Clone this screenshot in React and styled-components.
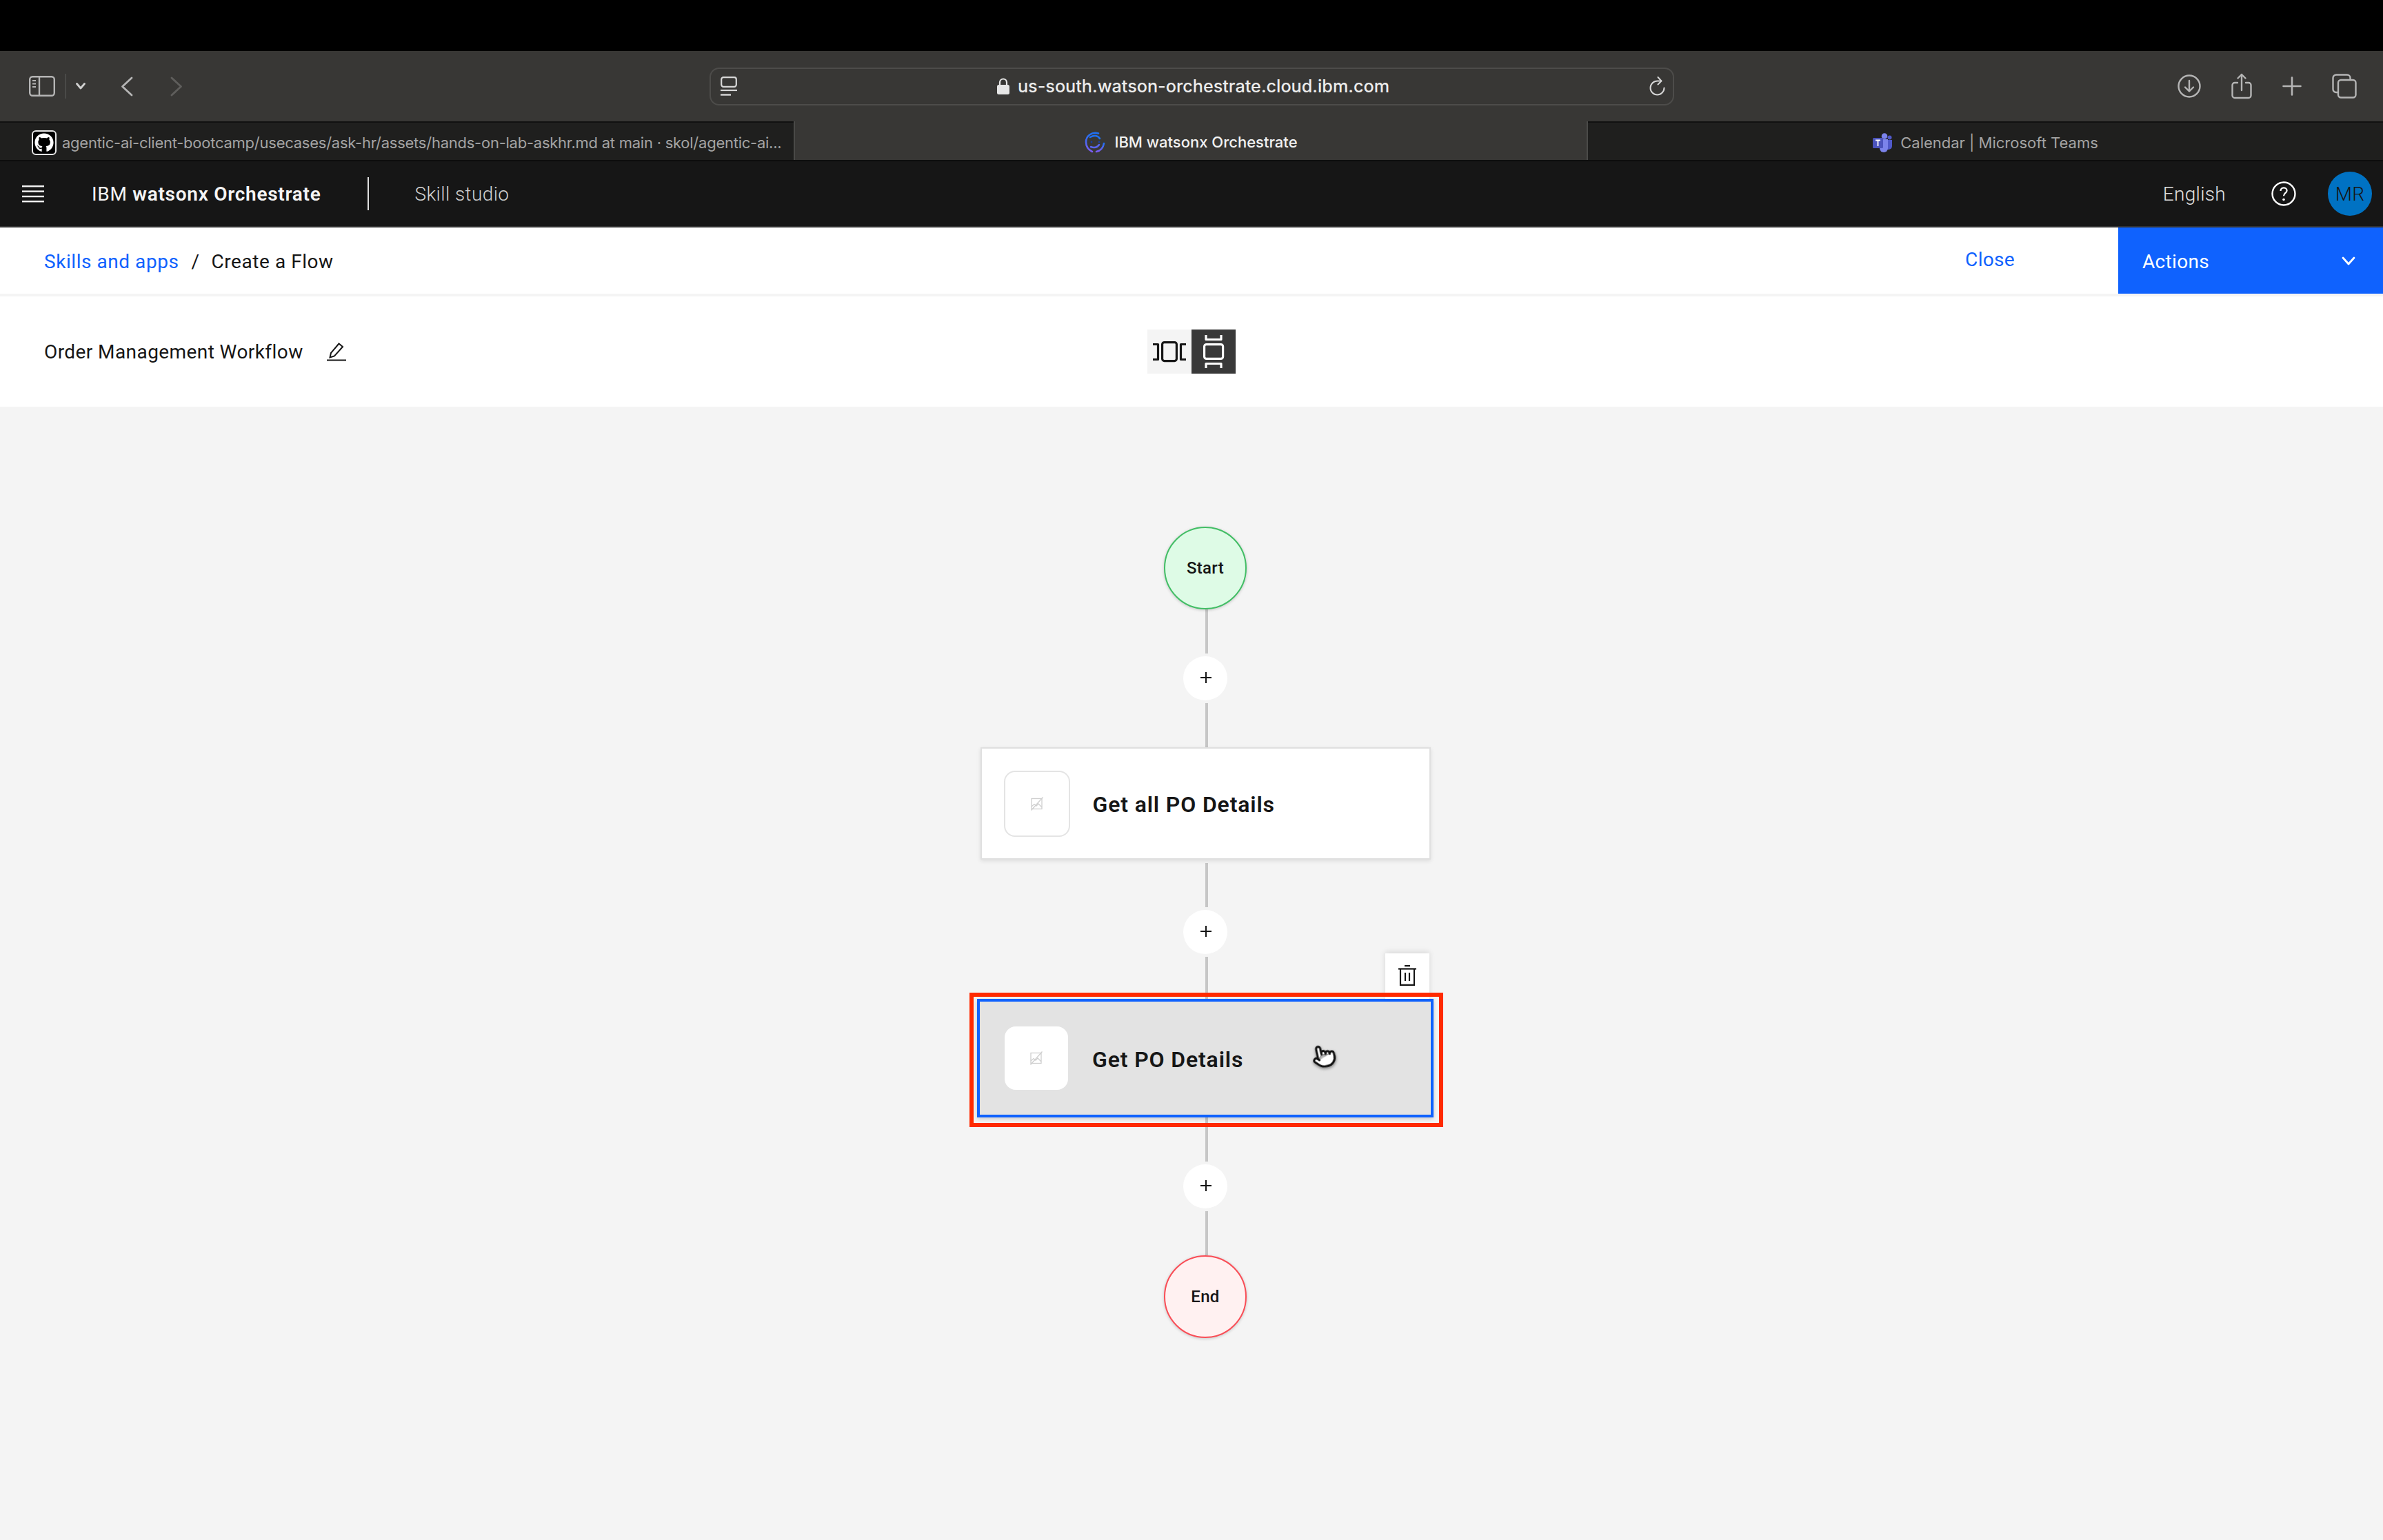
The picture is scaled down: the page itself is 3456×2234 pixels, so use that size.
import React from 'react';
import styled, { createGlobalStyle } from 'styled-components';
import { FaGithub } from 'react-icons/fa';
import { Pointer } from 'lucide-react';

const GlobalStyle = createGlobalStyle`
  html, body { margin: 0; padding: 0; background: #f4f4f4; overflow: hidden; }
  * { box-sizing: border-box; }
  #root { font-family: Roboto, "Liberation Sans", sans-serif; }
`;

const Page = styled.div`
  width: 3456px;
  height: 2234px;
  display: flex;
  flex-direction: column;
`;

const BlackStrip = styled.div`
  height: 74px;
  background: #000;
`;

/* browser toolbar */
const BrowserBar = styled.div`
  height: 104px;
  background: #383735;
  display: grid;
  grid-template-columns: 1029px 1399px 1fr;
  align-items: center;
  border-bottom: 2px solid #111;
`;

const NavCluster = styled.div`
  display: flex;
  align-items: center;
  padding-left: 42px;
  svg { display: block; }
`;

const ClusterRule = styled.div`
  width: 2px;
  height: 36px;
  background: #4a4a48;
  margin: 0 14px 0 14px;
`;

const NavGap = styled.div`
  width: ${(props) => props.$w}px;
`;

const AddressBar = styled.div`
  height: 55px;
  border: 2px solid #4d4c4a;
  border-radius: 14px;
  display: grid;
  grid-template-columns: 60px 1fr 60px;
  align-items: center;
  padding: 0 10px 0 14px;
`;

const UrlText = styled.div`
  display: flex;
  align-items: center;
  justify-content: center;
  gap: 12px;
  font-family: Inter, sans-serif;
  font-size: 25.2px;
  font-weight: 500;
  color: #ececec;
`;

const ReloadSlot = styled.div`
  display: flex;
  justify-content: flex-end;
`;

const RightIcons = styled.div`
  display: flex;
  align-items: center;
  justify-content: flex-end;
  gap: 44px;
  padding-right: 38px;
  svg { display: block; }
`;

/* browser tabs */
const TabStrip = styled.div`
  height: 56px;
  display: grid;
  grid-template-columns: 1151px 1152px 1fr;
  background: #1f1f1e;
  border-bottom: 2px solid #0d0d0d;
`;

const Tab = styled.div`
  display: flex;
  align-items: center;
  justify-content: ${(props) => (props.$left ? 'flex-start' : 'center')};
  gap: ${(props) => (props.$left ? 8 : 12)}px;
  padding-left: ${(props) => (props.$left ? '46px' : '0')};
  padding-top: 4px;
  font-family: Inter, sans-serif;
  font-size: 22px;
  letter-spacing: ${(props) => (props.$left ? '-0.25px' : '0')};
  font-weight: ${(props) => (props.$active ? 500 : 400)};
  color: ${(props) => (props.$active ? '#f2f2f2' : '#a3a3a3')};
  background: ${(props) => (props.$active ? '#383735' : 'transparent')};
  white-space: nowrap;
  ${(props) => props.$active && `
    margin-top: -2px;
    border-left: 2px solid #4a4a48;
    border-right: 2px solid #4a4a48;
  `}
`;

const GithubBox = styled.div`
  width: 36px;
  height: 36px;
  flex: none;
  background: #000;
  border: 2px solid #e6e6e6;
  border-radius: 6px;
  color: #fff;
  display: flex;
  align-items: center;
  justify-content: center;
`;

/* app header */
const AppHeader = styled.header`
  height: 96px;
  background: #161616;
  border-bottom: 2px solid #333;
  display: flex;
  align-items: center;
  padding: 0 16px 0 32px;
  color: #f4f4f4;
  letter-spacing: 0.32px;
`;

const Brand = styled.div`
  margin-left: 69px;
  font-size: 28px;
  letter-spacing: 0.72px;
  color: #f4f4f4;
  b { font-weight: 600; }
`;

const HeaderRule = styled.div`
  width: 2px;
  height: 48px;
  background: #e0e0e0;
  margin: 0 66px 0 68px;
`;

const SkillLabel = styled.div`
  font-size: 28px;
  font-weight: 300;
  letter-spacing: 0.4px;
  color: #d0d0d0;
`;

const Language = styled.div`
  margin-left: auto;
  font-size: 28px;
  font-weight: 300;
  color: #e0e0e0;
`;

const HelpIcon = styled.div`
  margin: 0 46px 0 66px;
  display: flex;
`;

const Avatar = styled.div`
  width: 64px;
  height: 64px;
  border-radius: 50%;
  background: #0072c3;
  color: #161616;
  font-size: 28px;
  font-weight: 300;
  display: flex;
  align-items: center;
  justify-content: center;
`;

/* breadcrumb row */
const CrumbRow = styled.div`
  height: 100px;
  background: #fff;
  border-bottom: 4px solid #f4f4f4;
  display: flex;
  align-items: flex-start;
  padding-left: 64px;
  letter-spacing: 0.32px;
`;

const Crumbs = styled.div`
  height: 98px;
  display: flex;
  align-items: center;
  font-size: 28px;
  letter-spacing: 0.55px;
  color: #161616;
`;

const CrumbLink = styled.span`
  color: #0f62fe;
`;

const CrumbSlash = styled.span`
  margin: 0 17px 0 18px;
`;

const CloseLink = styled.div`
  margin-left: auto;
  margin-right: 150px;
  height: 92px;
  display: flex;
  align-items: center;
  font-size: 28px;
  color: #0f62fe;
`;

const ActionsButton = styled.div`
  width: 384px;
  height: 96px;
  background: #0f62fe;
  color: #fff;
  font-size: 28px;
  display: flex;
  align-items: center;
  justify-content: space-between;
  padding: 2px 40px 0 35px;
`;

/* title row */
const TitleRow = styled.div`
  height: 160px;
  background: #fff;
  display: grid;
  grid-template-columns: 1664px 128px 1fr;
  align-items: center;
`;

const FlowName = styled.div`
  display: flex;
  align-items: center;
  gap: 34px;
  padding-left: 64px;
  font-size: 28px;
  color: #161616;
  letter-spacing: 0.42px;
`;

const Toggle = styled.div`
  display: flex;
  height: 64px;
`;

const ToggleButton = styled.div`
  width: 64px;
  height: 64px;
  background: ${(props) => (props.$on ? '#393939' : '#f4f4f4')};
  svg { display: block; }
`;

/* flow canvas */
const Canvas = styled.main`
  flex: 1;
  background: #f4f4f4;
  padding: 174px 0 0 1408px;
`;

const FlowColumn = styled.div`
  width: 680px;
  display: flex;
  flex-direction: column;
  align-items: center;
`;

const Terminal = styled.div`
  width: 120px;
  height: 120px;
  border-radius: 50%;
  border: 2px solid ${(props) => (props.$end ? '#fa4d56' : '#42be65')};
  background: ${(props) => (props.$end ? '#fff1f1' : '#defbe6')};
  box-shadow: 0 1px 4px rgba(0, 0, 0, 0.2);
  display: flex;
  align-items: center;
  justify-content: center;
  font-size: 24px;
  font-weight: 500;
  letter-spacing: 0.3px;
  color: #161616;
  position: relative;
  z-index: 1;
`;

const Line = styled.div`
  width: 4px;
  height: ${(props) => props.$h || 64}px;
  margin-left: 4px;
  background: #c6c6c6;
`;

const AddButton = styled.div`
  width: 64px;
  height: 64px;
  margin: 4px 0;
  border-radius: 50%;
  background: #fff;
  display: flex;
  align-items: center;
  justify-content: center;
  svg { display: block; margin-left: 2px; margin-top: -2px; }
`;

const Card = styled.div`
  position: relative;
  width: ${(props) => (props.$selected ? 662 : 653)}px;
  height: ${(props) => (props.$selected ? 172 : 163)}px;
  display: flex;
  align-items: center;
  gap: ${(props) => (props.$selected ? 35 : 33)}px;
  padding-left: ${(props) => (props.$selected ? 36 : 32)}px;
  margin-bottom: ${(props) => (props.$selected ? 0 : 5)}px;
  background: ${(props) => (props.$selected ? '#e3e3e3' : '#fff')};
  border: ${(props) => (props.$selected ? '4px solid #0f62fe' : '2px solid #e0e0e0')};
  box-shadow: 0 2px 6px rgba(0, 0, 0, ${(props) => (props.$selected ? 0.18 : 0.1)});
  font-size: 32px;
  font-weight: 600;
  color: #161616;
  letter-spacing: 0.85px;
`;

const CardTitle = styled.span`
  padding-top: 3px;
`;

const IconTile = styled.div`
  width: ${(props) => (props.$selected ? 92 : 96)}px;
  height: ${(props) => (props.$selected ? 92 : 96)}px;
  flex: none;
  border-radius: 16px;
  background: #fff;
  border: ${(props) => (props.$selected ? 'none' : '2px solid #e4e4e4')};
  display: flex;
  align-items: center;
  justify-content: center;
`;

const DeleteButton = styled.div`
  position: absolute;
  right: 2px;
  bottom: calc(100% + 4px);
  width: 64px;
  height: 66px;
  background: #fff;
  box-shadow: 0 -2px 8px rgba(0, 0, 0, 0.12);
  display: flex;
  align-items: flex-start;
  justify-content: center;
  padding-top: 17px;
`;

const Callout = styled.div`
  position: absolute;
  top: -13px;
  left: -15px;
  right: -18px;
  bottom: -18px;
  border: 6px solid #ff2a00;
  pointer-events: none;
`;

const HandCursor = styled.div`
  position: absolute;
  left: 481px;
  top: 61px;
  display: flex;
  transform: rotate(-12deg);
  filter: drop-shadow(0 2px 2px rgba(0, 0, 0, 0.45));
`;

const SidebarIcon = () => (
  <svg width="38" height="30" viewBox="0 0 38 30" fill="none" stroke="#b5b5b5" strokeWidth="2.4">
    <rect x="1.2" y="1.2" width="35.6" height="27.6" rx="4" />
    <path d="M15 1v28" />
    <path d="M5 7h5M5 11.5h5M5 16h5" strokeWidth="2" />
  </svg>
);

const Chevron = ({ d, color, w, h }) => (
  <svg width={w} height={h} viewBox={`0 0 ${w} ${h}`} fill="none" stroke={color} strokeWidth="2.8" strokeLinecap="round" strokeLinejoin="round">
    <path d={d} />
  </svg>
);

const PageMenuIcon = () => (
  <svg width="24" height="28" viewBox="0 0 24 28" fill="none" stroke="#d8d8d8" strokeWidth="2.2">
    <rect x="1.2" y="1.2" width="21.6" height="13.6" rx="3" />
    <path d="M0 20h24" />
    <path d="M0 26.5h15" strokeWidth="2.4" />
  </svg>
);

const LockIcon = () => (
  <svg width="18" height="24" viewBox="0 0 18 24" fill="#e6e6e6">
    <rect x="0" y="10" width="18" height="14" rx="2.5" />
    <path d="M4 11V6.5a5 5 0 0 1 10 0V11" fill="none" stroke="#e6e6e6" strokeWidth="2.2" />
  </svg>
);

const ReloadIcon = () => (
  <svg width="24" height="28" viewBox="0 0 24 28" fill="none" stroke="#d4d4d4" strokeWidth="2" strokeLinecap="round" strokeLinejoin="round">
    <path d="M21.5 16.5a10 10 0 1 1-10-10h5" />
    <path d="M12.5 1l5 5.5-5 5" />
  </svg>
);

const DownloadIcon = () => (
  <svg width="34" height="34" viewBox="0 0 34 34" fill="none" stroke="#b5b5b5" strokeWidth="2.4" strokeLinecap="round" strokeLinejoin="round">
    <circle cx="17" cy="17" r="15.5" />
    <path d="M17 9v15M11 18.5l6 6 6-6" />
  </svg>
);

const ShareIcon = () => (
  <svg width="30" height="38" viewBox="0 0 30 38" fill="none" stroke="#b5b5b5" strokeWidth="2.4" strokeLinecap="round" strokeLinejoin="round">
    <path d="M9 14H5a3.5 3.5 0 0 0-3.5 3.5v15A3.5 3.5 0 0 0 5 36h20a3.5 3.5 0 0 0 3.5-3.5v-15A3.5 3.5 0 0 0 25 14h-4" />
    <path d="M15 25V2M9.5 7.5 15 2l5.5 5.5" />
  </svg>
);

const PlusIcon = () => (
  <svg width="28" height="28" viewBox="0 0 28 28" stroke="#b5b5b5" strokeWidth="2.6" strokeLinecap="round">
    <path d="M14 1.5v25M1.5 14h25" />
  </svg>
);

const TabsIcon = () => (
  <svg width="36" height="36" viewBox="0 0 36 36" fill="none" stroke="#b5b5b5" strokeWidth="2.4" strokeLinejoin="round">
    <rect x="9" y="9" width="25.5" height="25.5" rx="4" />
    <path d="M9 27H6a4.500 4.500 0 0 1-4.500-4.500V6A4.500 4.500 0 0 1 6 1.500h16A4.500 4.500 0 0 1 26.500 6v3" />
  </svg>
);

const OrchestrateLogo = () => (
  <svg width="32" height="32" viewBox="0 0 32 32" fill="none" strokeWidth="2.6" strokeLinecap="round">
    <defs>
      <linearGradient id="orchGrad" x1="0" y1="0" x2="0" y2="1">
        <stop offset="0" stopColor="#1f70f0" />
        <stop offset="1" stopColor="#7c5cf0" />
      </linearGradient>
    </defs>
    <path d="M21 3.500C11 1 3 7 3 16c0 6 3 11 9 14" stroke="url(#orchGrad)" />
    <path d="M29 18c-1 6-5 11-11 12" stroke="url(#orchGrad)" />
    <path d="M9 9c5-3 11-3 14 2" stroke="#1f70f0" />
    <path d="M10 23c5 2 9 1 12-3" stroke="#5a66f0" />
    <circle cx="11" cy="16" r="1.400" fill="#1a3f9e" />
    <circle cx="22" cy="16" r="1.400" fill="#1a3f9e" />
  </svg>
);

const TeamsLogo = () => (
  <svg width="28" height="28" viewBox="0 0 28 28">
    <circle cx="17" cy="4.500" r="4.300" fill="#7b83eb" />
    <circle cx="24.500" cy="6.500" r="3" fill="#5059c9" />
    <path d="M20 10h8v9a5 5 0 0 1-5 5h-3z" fill="#5059c9" />
    <path d="M10 9h12v13a6 6 0 0 1-12 0z" fill="#7b83eb" />
    <rect x="0" y="7" width="15" height="15" rx="1.500" fill="#4b53bc" />
    <path d="M4 10.500h7M7.500 10.500V19" stroke="#fff" strokeWidth="1.800" fill="none" />
  </svg>
);

const HamburgerIcon = () => (
  <svg width="32" height="26" viewBox="0 0 32 26" fill="#f4f4f4">
    <rect y="1" width="32" height="2.400" />
    <rect y="8.400" width="32" height="2.400" />
    <rect y="15.800" width="32" height="2.400" />
    <rect y="23" width="32" height="2.400" />
  </svg>
);

const HelpGlyph = () => (
  <svg width="36" height="36" viewBox="0 0 36 36" fill="none" stroke="#fff" strokeWidth="2.400">
    <circle cx="18" cy="18" r="16.500" />
    <path d="M13.500 14c0-2.800 2-4.600 4.600-4.600s4.500 1.800 4.500 4.200c0 3.400-4.600 3.400-4.600 7.600" strokeWidth="2.200" />
    <circle cx="18" cy="26.500" r="1.800" fill="#fff" stroke="none" />
  </svg>
);

const PencilIcon = () => (
  <svg width="28" height="28" viewBox="0 0 28 28" fill="none" stroke="#161616" strokeWidth="2">
    <path d="M0 26.500h28" />
    <path d="M4.500 22.500 6 16 17.500 2.500l5.500 4.500L11 20.500z" />
  </svg>
);

const HorizontalLayoutIcon = () => (
  <svg width="64" height="64" viewBox="0 0 64 64" fill="none" stroke="#161616" strokeWidth="3.200" strokeLinejoin="round">
    <rect x="21.600" y="18.600" width="20.800" height="27" rx="3" />
    <path d="M8 21.500h7.500v22H8" />
    <path d="M56 21.500h-7.500v22H56" />
  </svg>
);

const VerticalLayoutIcon = () => (
  <svg width="64" height="64" viewBox="0 0 64 64" fill="none" stroke="#fff" strokeWidth="3.200" strokeLinejoin="round">
    <rect x="18.600" y="21.600" width="27" height="20.800" rx="3" />
    <path d="M21 8v6.500h22V8" />
    <path d="M21 56v-6.500h22V56" />
  </svg>
);

const SmallPlus = () => (
  <svg width="18" height="18" viewBox="0 0 18 18" stroke="#161616" strokeWidth="2">
    <path d="M9 1v16M1 9h16" />
  </svg>
);

const NoImageIcon = () => (
  <svg width="18" height="20" viewBox="0 0 18 20" fill="none" stroke="#cfcfcf" strokeWidth="1.300">
    <rect x="1" y="2.500" width="15" height="15" />
    <path d="M1 14l4-3.500 3 2.500 3-3 5 5" />
    <path d="M0.500 19.500 17.500 0.500" />
  </svg>
);

const TrashIcon = () => (
  <svg width="26" height="30" viewBox="0 0 26 30" fill="none" stroke="#161616" strokeWidth="2.200">
    <path d="M9 1.100h8" />
    <path d="M0 5.500h26" />
    <path d="M3 5.500v23.400h20V5.500" />
    <path d="M10 11v12M16 11v12" />
  </svg>
);

const FlowCard = ({ title, selected }) => (
  <Card $selected={selected}>
    <IconTile $selected={selected}>
      <NoImageIcon />
    </IconTile>
    <CardTitle>{title}</CardTitle>
    {selected && (
      <>
        <DeleteButton>
          <TrashIcon />
        </DeleteButton>
        <HandCursor>
          <Pointer size={36} color="#111" fill="#fff" strokeWidth={2} />
        </HandCursor>
        <Callout />
      </>
    )}
  </Card>
);

const Connector = ({ tail }) => (
  <>
    <Line />
    <AddButton>
      <SmallPlus />
    </AddButton>
    <Line $h={tail} />
  </>
);

export default function App() {
  return (
    <Page>
      <GlobalStyle />
      <BlackStrip />
      <BrowserBar>
        <NavCluster>
          <SidebarIcon />
          <ClusterRule />
          <Chevron w={14} h={10} color="#d0d0d0" d="M1.500 1.500 7 8l5.500-6.500" />
          <NavGap $w={51} />
          <Chevron w={18} h={29} color="#b5b5b5" d="M16 2 2.500 14.500 16 27" />
          <NavGap $w={54} />
          <Chevron w={18} h={29} color="#5f5e5c" d="M2 2l13.500 12.500L2 27" />
        </NavCluster>
        <AddressBar>
          <PageMenuIcon />
          <UrlText>
            <LockIcon />
            us-south.watson-orchestrate.cloud.ibm.com
          </UrlText>
          <ReloadSlot>
            <ReloadIcon />
          </ReloadSlot>
        </AddressBar>
        <RightIcons>
          <DownloadIcon />
          <ShareIcon />
          <PlusIcon />
          <TabsIcon />
        </RightIcons>
      </BrowserBar>
      <TabStrip>
        <Tab $left>
          <GithubBox>
            <FaGithub size={28} />
          </GithubBox>
          agentic-ai-client-bootcamp/usecases/ask-hr/assets/hands-on-lab-askhr.md at main · skol/agentic-ai...
        </Tab>
        <Tab $active>
          <OrchestrateLogo />
          IBM watsonx Orchestrate
        </Tab>
        <Tab>
          <TeamsLogo />
          Calendar | Microsoft Teams
        </Tab>
      </TabStrip>
      <AppHeader>
        <HamburgerIcon />
        <Brand>
          IBM <b>watsonx Orchestrate</b>
        </Brand>
        <HeaderRule />
        <SkillLabel>Skill studio</SkillLabel>
        <Language>English</Language>
        <HelpIcon>
          <HelpGlyph />
        </HelpIcon>
        <Avatar>MR</Avatar>
      </AppHeader>
      <CrumbRow>
        <Crumbs>
          <CrumbLink>Skills and apps</CrumbLink>
          <CrumbSlash>/</CrumbSlash>
          Create a Flow
        </Crumbs>
        <CloseLink>Close</CloseLink>
        <ActionsButton>
          Actions
          <Chevron w={20} h={14} color="#fff" d="M2 2l8 9 8-9" />
        </ActionsButton>
      </CrumbRow>
      <TitleRow>
        <FlowName>
          Order Management Workflow
          <PencilIcon />
        </FlowName>
        <Toggle>
          <ToggleButton>
            <HorizontalLayoutIcon />
          </ToggleButton>
          <ToggleButton $on>
            <VerticalLayoutIcon />
          </ToggleButton>
        </Toggle>
      </TitleRow>
      <Canvas>
        <FlowColumn>
          <Terminal>Start</Terminal>
          <Connector />
          <FlowCard title="Get all PO Details" />
          <Connector tail={61} />
          <FlowCard title="Get PO Details" selected />
          <Connector />
          <Terminal $end>End</Terminal>
        </FlowColumn>
      </Canvas>
    </Page>
  );
}
